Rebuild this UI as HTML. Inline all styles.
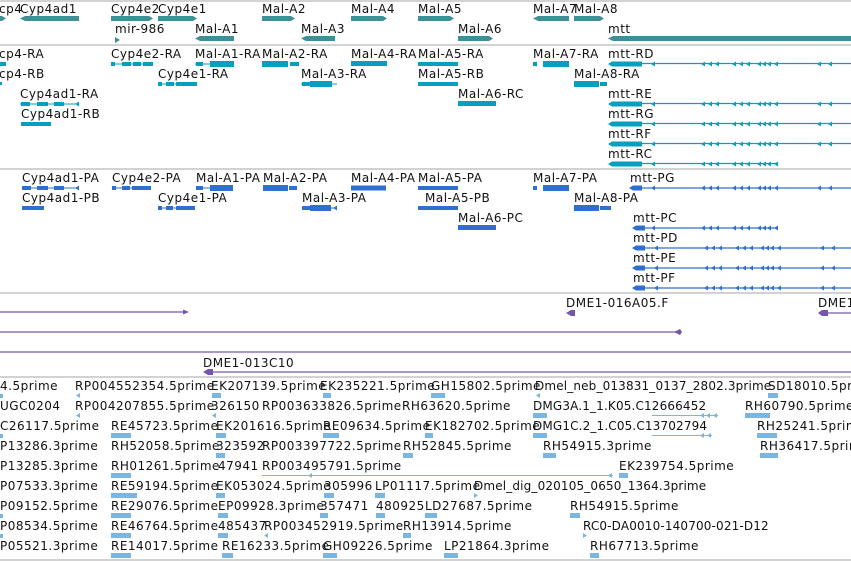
<!DOCTYPE html>
<html><head><meta charset="utf-8"><style>
html,body{margin:0;padding:0;background:#fff;width:851px;height:561px;overflow:hidden}
svg{display:block}
text{font-family:"DejaVu Sans","Liberation Sans",sans-serif;font-size:12px;fill:#111;letter-spacing:0.5px}
text.n{letter-spacing:0.15px}
</style></head><body>
<svg width="851" height="561" xmlns="http://www.w3.org/2000/svg">
<defs>
<polygon id="la" points="0,2.5 4,0 4,5"/>
<polygon id="ra" points="4,2.5 0,0 0,5"/>
</defs>
<g stroke="#c4c4c4" stroke-width="1.5">
<line x1="0" y1="1" x2="851" y2="1"/><line x1="0" y1="45" x2="851" y2="45"/>
<line x1="0" y1="169" x2="851" y2="169"/><line x1="0" y1="293" x2="851" y2="293"/>
<line x1="0" y1="377" x2="851" y2="377"/><line x1="0" y1="560" x2="851" y2="560"/>
</g>

<g>
<text x="-1" y="13">cp4</text><text x="20" y="13">Cyp4ad1</text><text x="111" y="13">Cyp4e2</text><text x="158" y="13">Cyp4e1</text>
<text x="262" y="13">Mal-A2</text><text x="351" y="13">Mal-A4</text><text x="418" y="13">Mal-A5</text><text x="533" y="13">Mal-A7</text><text x="574" y="13">Mal-A8</text>
<text x="115" y="33">mir-986</text><text x="195" y="33">Mal-A1</text><text x="301" y="33">Mal-A3</text><text x="458" y="33">Mal-A6</text><text x="608" y="33">mtt</text>
</g>
<g fill="#3f9096">
<polygon points="0,16 2,16 6,18.5 2,21 0,21"/>
<polygon points="20,18.5 25,16 79,16 79,21 25,21"/>
<polygon points="111,16 149,16 153,18.5 149,21 111,21"/>
<polygon points="158,16 193,16 197,18.5 193,21 158,21"/>
<polygon points="262,16 291,16 295,18.5 291,21 262,21"/>
<polygon points="351,16 383,16 387,18.5 383,21 351,21"/>
<polygon points="418,16 450,16 454,18.5 450,21 418,21"/>
<polygon points="533,18.5 538,16 569,16 569,21 538,21"/>
<polygon points="574,16 600,16 604,18.5 600,21 574,21"/>
<polygon points="115,37 120,40 115,43"/>
<polygon points="195,38.5 200,36 234,36 234,41 200,41"/>
<polygon points="301,38.5 306,36 335,36 335,41 306,41"/>
<polygon points="458,36 489,36 493,38.5 489,41 458,41"/>
<polygon points="608,38.5 613,36 851,36 851,41 613,41"/>
</g>

<g>
<text x="-1" y="58">cp4-RA</text><text x="111" y="58">Cyp4e2-RA</text><text x="195" y="58">Mal-A1-RA</text><text x="262" y="58">Mal-A2-RA</text><text x="351" y="58">Mal-A4-RA</text><text x="418" y="58">Mal-A5-RA</text><text x="533" y="58">Mal-A7-RA</text><text x="608" y="58">mtt-RD</text>
<text x="-1" y="78">cp4-RB</text><text x="158" y="78">Cyp4e1-RA</text><text x="301" y="78">Mal-A3-RA</text><text x="418" y="78">Mal-A5-RB</text><text x="574" y="78">Mal-A8-RA</text>
<text x="20" y="98">Cyp4ad1-RA</text><text x="458" y="98">Mal-A6-RC</text><text x="608" y="98">mtt-RE</text>
<text x="21" y="118">Cyp4ad1-RB</text><text x="608" y="118">mtt-RG</text>
<text x="608" y="138">mtt-RF</text><text x="608" y="158">mtt-RC</text>
</g>
<g fill="#069fbf" stroke="none">
<rect x="0" y="62" width="6" height="4"/><rect x="0" y="82" width="2" height="3"/>
<rect x="111" y="63.5" width="42" height="1"/><rect x="111" y="62" width="4" height="4"/><rect x="122" y="62" width="9" height="4"/><rect x="133" y="62" width="8" height="4"/><rect x="143" y="62" width="10" height="4"/>
<rect x="195" y="63.5" width="39" height="1"/><rect x="196" y="62" width="7" height="4"/><rect x="210" y="61" width="24" height="6"/>
<rect x="262" y="61" width="26" height="6"/><rect x="290" y="62" width="9" height="4"/>
<rect x="351" y="61" width="36" height="5"/>
<rect x="418" y="62" width="40" height="4"/>
<rect x="533" y="62" width="4" height="4"/><rect x="543" y="61" width="26" height="6"/>
<rect x="158" y="83.5" width="39" height="1"/><rect x="158" y="82" width="4" height="4"/><rect x="166" y="82" width="8" height="4"/><rect x="176" y="82" width="21" height="4"/>
<rect x="301" y="83.5" width="36" height="1"/><rect x="302" y="82" width="8" height="4"/><rect x="310" y="81" width="22" height="6"/>
<rect x="418" y="82" width="40" height="4"/>
<rect x="574" y="81" width="25" height="6"/><rect x="600" y="82" width="7" height="4"/>
<rect x="20" y="103.5" width="59" height="1"/><rect x="21" y="102" width="9" height="4"/><rect x="37" y="102" width="11" height="4"/><rect x="54" y="102" width="10" height="4"/>
<rect x="458" y="101" width="38" height="5"/>
<rect x="21" y="122" width="30" height="4"/>
</g>
<g fill="#069fbf">
<use href="#la" x="195" y="61.5"/><use href="#la" x="75" y="101.5"/><use href="#la" x="301" y="81.5"/><use href="#la" x="533" y="61.5"/>
</g>
<g fill="#069fbf" stroke="#069fbf">
<g id="mttR">
<line x1="641" y1="63.5" x2="851" y2="63.5" stroke-width="1.2"/>
<rect x="612" y="61.5" width="30" height="5" stroke="none"/><polygon points="608,64 612,61.5 612,66.5" stroke="none"/>
<g stroke="none"><use href="#la" x="651" y="61.5"/><use href="#la" x="701" y="61.5"/><use href="#la" x="708" y="61.5"/><use href="#la" x="715" y="61.5"/><use href="#la" x="732" y="61.5"/><use href="#la" x="739" y="61.5"/><use href="#la" x="746" y="61.5"/><use href="#la" x="757" y="61.5"/><use href="#la" x="762" y="61.5"/><use href="#la" x="767" y="61.5"/><use href="#la" x="774" y="61.5"/><use href="#la" x="817" y="61.5"/><use href="#la" x="828" y="61.5"/></g>
</g>
<use href="#mttR" y="40"/><use href="#mttR" y="60"/><use href="#mttR" y="80"/>
</g>
<g fill="#069fbf" stroke="#069fbf">
<line x1="641" y1="163.5" x2="777" y2="163.5" stroke-width="1.2"/>
<rect x="612" y="161.5" width="30" height="5" stroke="none"/><polygon points="608,164 612,161.5 612,166.5" stroke="none"/>
<g stroke="none"><use href="#la" x="651" y="161.5"/><use href="#la" x="701" y="161.5"/><use href="#la" x="708" y="161.5"/><use href="#la" x="715" y="161.5"/><use href="#la" x="732" y="161.5"/><use href="#la" x="739" y="161.5"/><use href="#la" x="746" y="161.5"/><use href="#la" x="757" y="161.5"/><use href="#la" x="762" y="161.5"/><use href="#la" x="767" y="161.5"/><use href="#la" x="774" y="161.5"/></g>
</g>

<g>
<text x="22" y="182">Cyp4ad1-PA</text><text x="112" y="182">Cyp4e2-PA</text><text x="196" y="182">Mal-A1-PA</text><text x="263" y="182">Mal-A2-PA</text><text x="351" y="182">Mal-A4-PA</text><text x="418" y="182">Mal-A5-PA</text><text x="533" y="182">Mal-A7-PA</text><text x="630" y="182">mtt-PG</text>
<text x="22" y="202">Cyp4ad1-PB</text><text x="158" y="202">Cyp4e1-PA</text><text x="302" y="202">Mal-A3-PA</text><text x="425" y="202">Mal-A5-PB</text><text x="574" y="202">Mal-A8-PA</text>
<text x="458" y="222">Mal-A6-PC</text><text x="633" y="222">mtt-PC</text>
<text x="633" y="242">mtt-PD</text><text x="633" y="262">mtt-PE</text><text x="633" y="282">mtt-PF</text>
</g>
<g fill="#2f6fd0">
<rect x="22" y="187.5" width="57" height="1"/><rect x="22" y="186" width="9" height="4"/><rect x="37" y="186" width="11" height="4"/><rect x="54" y="186" width="10" height="4"/><use href="#la" x="75" y="185.5"/>
<rect x="112" y="187.5" width="39" height="1"/><rect x="112" y="186" width="4" height="4"/><rect x="122" y="186" width="8" height="4"/><rect x="132" y="186" width="19" height="4"/>
<rect x="196" y="187.5" width="37" height="1"/><rect x="196" y="186" width="7" height="4"/><rect x="210" y="185" width="23" height="6"/>
<rect x="263" y="185" width="25" height="6"/><rect x="289" y="186" width="8" height="4"/>
<rect x="351" y="185.5" width="35" height="5"/>
<rect x="418" y="186" width="40" height="4"/>
<rect x="533" y="186" width="4" height="4"/><rect x="543" y="185" width="26" height="6"/>
<rect x="22" y="206" width="22" height="4"/>
<rect x="158" y="207.5" width="37" height="1"/><rect x="158" y="206" width="4" height="4"/><rect x="166" y="206" width="7" height="4"/><rect x="176" y="206" width="19" height="4"/>
<rect x="302" y="207.5" width="35" height="1"/><rect x="302" y="206" width="8" height="4"/><rect x="310" y="205" width="21" height="6"/><use href="#la" x="333" y="205.5"/>
<rect x="418" y="206" width="40" height="4"/>
<rect x="574" y="205" width="25" height="6"/><rect x="600" y="206" width="11" height="4"/>
<rect x="458" y="225" width="38" height="5"/>
</g>
<g fill="#2f6fd0" stroke="#2f6fd0">
<g id="mttP">
<line x1="641" y1="188" x2="851" y2="188" stroke-width="1.2"/>
<rect x="633" y="185.5" width="9" height="5" stroke="none"/><polygon points="629,188 633,185.5 633,190.5" stroke="none"/>
<g stroke="none"><use href="#la" x="651" y="185.5"/><use href="#la" x="701" y="185.5"/><use href="#la" x="708" y="185.5"/><use href="#la" x="715" y="185.5"/><use href="#la" x="732" y="185.5"/><use href="#la" x="739" y="185.5"/><use href="#la" x="746" y="185.5"/><use href="#la" x="757" y="185.5"/><use href="#la" x="762" y="185.5"/><use href="#la" x="767" y="185.5"/><use href="#la" x="774" y="185.5"/><use href="#la" x="817" y="185.5"/><use href="#la" x="828" y="185.5"/></g>
</g>
<use href="#mttP" x="3" y="60"/><use href="#mttP" x="3" y="80"/><use href="#mttP" x="3" y="100"/>
<line x1="641" y1="228" x2="777" y2="228" stroke-width="1.2"/>
<rect x="636" y="225.5" width="9" height="5" stroke="none"/><polygon points="632,228 636,225.5 636,230.5" stroke="none"/>
<g stroke="none"><use href="#la" x="651" y="225.5"/><use href="#la" x="701" y="225.5"/><use href="#la" x="708" y="225.5"/><use href="#la" x="715" y="225.5"/><use href="#la" x="732" y="225.5"/><use href="#la" x="739" y="225.5"/><use href="#la" x="746" y="225.5"/><use href="#la" x="757" y="225.5"/><use href="#la" x="762" y="225.5"/><use href="#la" x="767" y="225.5"/><use href="#la" x="774" y="225.5"/></g>
</g>

<text x="566" y="307">DME1-016A05.F</text><text x="818" y="307">DME1</text><text x="203" y="367">DME1-013C10</text>
<g fill="#7457ad" stroke="#7457ad">
<line x1="0" y1="312" x2="186" y2="312" stroke-width="1.2"/><polygon points="183,309.5 189,312 183,314.5" stroke="none"/>
<line x1="0" y1="332" x2="678" y2="332" stroke-width="1.2"/><polygon points="674,332 680,329 682,332 680,335" stroke="none"/>
<line x1="0" y1="352" x2="851" y2="352" stroke-width="1.2"/>
<line x1="208" y1="372" x2="851" y2="372" stroke-width="1.2"/><polygon points="203,372 208,369 213,369 213,375 208,375" stroke="none"/>
<polygon points="566,313 571,310 575,310 575,316 571,316" stroke="none"/>
<line x1="822" y1="313" x2="851" y2="313" stroke-width="1.2"/><polygon points="818,313 822,310 828,310 828,316 822,316" stroke="none"/>
</g>

<g>
<text x="0" y="390">4.5prime</text><text x="75" y="390">RP004552354.5prime</text><text x="211" y="390">EK207139.5prime</text><text x="320" y="390">EK235221.5prime</text><text x="431" y="390">GH15802.5prime</text><text class="n" x="535" y="390">Dmel_neb_013831_0137_2802.3prime</text><text x="768" y="390">SD18010.5prime</text>
<text x="0" y="410">UGC0204</text><text x="75" y="410">RP004207855.5prime</text><text x="211" y="410">326150</text><text x="262" y="410">RP003633826.5prime</text><text x="402" y="410">RH63620.5prime</text><text class="n" x="533" y="410">DMG3A.1_1.K05.C12666452</text><text x="745" y="410">RH60790.5prime</text>
<text x="0" y="430">C26117.5prime</text><text x="111" y="430">RE45723.5prime</text><text x="216" y="430">EK201616.5prime</text><text x="323" y="430">RE09634.5prime</text><text x="425" y="430">EK182702.5prime</text><text class="n" x="533" y="430">DMG1C.2_1.C05.C13702794</text><text x="757" y="430">RH25241.5prime</text>
<text x="0" y="450">P13286.3prime</text><text x="111" y="450">RH52058.5prime</text><text x="216" y="450">323592</text><text x="262" y="450">RP003397722.5prime</text><text x="403" y="450">RH52845.5prime</text><text x="543" y="450">RH54915.3prime</text><text x="760" y="450">RH36417.5prime</text>
<text x="0" y="470">P13285.3prime</text><text x="111" y="470">RH01261.5prime</text><text x="218" y="470">47941</text><text x="262" y="470">RP003495791.5prime</text><text x="619" y="470">EK239754.5prime</text>
<text x="0" y="490">P07533.3prime</text><text x="111" y="490">RE59194.5prime</text><text x="216" y="490">EK053024.5prime</text><text x="324" y="490">305996</text><text x="375" y="490">LP01117.5prime</text><text class="n" x="474" y="490">Dmel_dig_020105_0650_1364.3prime</text>
<text x="0" y="510">P09152.5prime</text><text x="111" y="510">RE29076.5prime</text><text x="218" y="510">EP09928.3prime</text><text x="320" y="510">357471</text><text x="376" y="510">480925</text><text x="425" y="510">LD27687.5prime</text><text x="570" y="510">RH54915.5prime</text>
<text x="0" y="530">P08534.5prime</text><text x="111" y="530">RE46764.5prime</text><text x="218" y="530">485437</text><text x="264" y="530">RP003452919.5prime</text><text x="403" y="530">RH13914.5prime</text><text class="n" x="583" y="530">RC0-DA0010-140700-021-D12</text>
<text x="0" y="550">P05521.3prime</text><text x="111" y="550">RE14017.5prime</text><text x="222" y="550">RE16233.5prime</text><text x="323" y="550">GH09226.5prime</text><text x="444" y="550">LP21864.3prime</text><text x="590" y="550">RH67713.5prime</text>
</g>
<g fill="#7ab6df" stroke="#7ab6df">
<g stroke="none">
<rect x="0" y="394" width="3" height="4"/><use href="#la" x="76" y="393"/><rect x="212" y="393" width="9" height="5"/><rect x="323" y="393" width="8" height="5"/><rect x="431" y="393" width="14" height="5"/><use href="#la" x="536" y="393"/><rect x="768" y="393" width="10" height="5"/>
<use href="#la" x="76" y="413"/><use href="#la" x="212" y="413"/><rect x="533" y="413" width="14" height="5"/><rect x="745" y="413" width="25" height="5"/>
<rect x="0" y="434" width="3" height="4"/><rect x="111" y="433" width="20" height="5"/><rect x="216" y="433" width="10" height="5"/><rect x="323" y="433" width="16" height="5"/><rect x="425" y="433" width="8" height="5"/><rect x="533" y="433" width="14" height="5"/><rect x="757" y="433" width="20" height="5"/>
<rect x="216" y="453" width="9" height="5"/><rect x="403" y="453" width="10" height="5"/><rect x="543" y="453" width="13" height="5"/><rect x="760" y="453" width="18" height="5"/>
<rect x="111" y="473" width="20" height="5"/><rect x="619" y="473" width="9" height="5"/>
<rect x="111" y="493" width="26" height="5"/><rect x="216" y="493" width="9" height="5"/><rect x="324" y="493" width="10" height="5"/><rect x="375" y="493" width="10" height="5"/><use href="#ra" x="474" y="493"/>
<rect x="0" y="514" width="3" height="4"/><rect x="111" y="513" width="20" height="5"/><rect x="218" y="513" width="10" height="5"/><rect x="320" y="513" width="8" height="5"/><rect x="376" y="513" width="9" height="5"/><rect x="425" y="513" width="12" height="5"/><rect x="570" y="513" width="10" height="5"/>
<rect x="0" y="534" width="3" height="4"/><rect x="111" y="533" width="20" height="5"/><rect x="218" y="533" width="10" height="5"/><use href="#la" x="264" y="533"/><rect x="403" y="533" width="8" height="5"/><use href="#ra" x="583" y="533"/>
<rect x="111" y="553" width="20" height="5"/><rect x="222" y="553" width="11" height="5"/><rect x="323" y="553" width="14" height="5"/><rect x="444" y="553" width="14" height="5"/><rect x="590" y="553" width="9" height="5"/>
</g>
<line x1="652" y1="415.5" x2="718" y2="415.5" stroke-width="1"/><line x1="652" y1="435.5" x2="712" y2="435.5" stroke-width="1"/><line x1="262" y1="475.5" x2="613" y2="475.5" stroke-width="1"/>
<g stroke="none"><use href="#la" x="700" y="413"/><use href="#la" x="706" y="413"/><use href="#la" x="713" y="413"/><use href="#la" x="700" y="433"/><use href="#la" x="707" y="433"/><use href="#la" x="308" y="473"/><use href="#la" x="608" y="473"/></g>
</g>
</svg>
</body></html>
